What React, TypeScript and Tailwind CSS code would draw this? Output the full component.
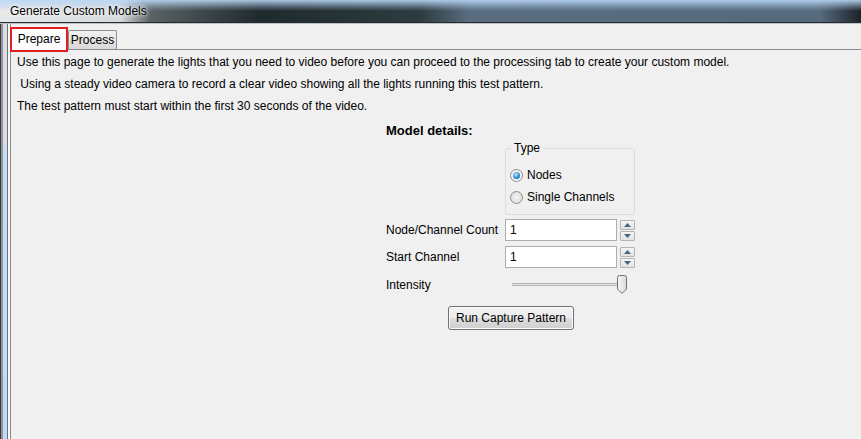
export default function App() {
  return (
    <div className="w-[861px] h-[439px] overflow-hidden flex flex-col bg-[#f0f0f0] font-['Liberation_Sans',sans-serif] text-[12px] text-black">
      {/* title bar */}
      <div className="h-[22px] shrink-0 flex items-center pl-[10px] [background-image:linear-gradient(180deg,rgba(185,215,245,0.9)_0px,rgba(175,208,240,0.4)_6px,rgba(0,0,0,0)_11px),linear-gradient(90deg,#e6e8ea_0px,#d6d9dc_120px,#5a6264_150px,#1f2a2c_260px,#2d3b40_420px,#5a6d80_470px,#566a7d_820px,#1c2328_861px)]">
        <span className="text-[12px] text-black [text-shadow:0_0_6px_#fff,0_0_3px_#fff]">Generate Custom Models</span>
      </div>
      <div className="h-[1px] shrink-0 bg-[#2b2b2b]" />
      <div className="h-[1px] shrink-0 bg-[#b9c2ca]" />

      <div className="flex flex-1 min-h-0">
        {/* left window frame */}
        <div className="w-[11px] shrink-0 flex">
          <div className="w-[1px] bg-[#3a3a3a]" />
          <div className="w-[2px] bg-[#8f959c]" />
          <div className="w-[4px] bg-[linear-gradient(180deg,#dcdde0_0px,#dcdde0_120px,#c6def6_124px,#c3dcf6_100%)]" />
          <div className="w-[1px] bg-[#6f747a]" />
          <div className="w-[2px] bg-[#f8f8f8]" />
          <div className="w-[1px] bg-[#8a8a8a]" />
        </div>

        <div className="flex-1 flex flex-col min-w-0">
          {/* tabs */}
          <div className="h-[25px] shrink-0 flex items-end -ml-[1px]">
            <div className="h-[25px] w-[58px] border-[2px] border-[#e31c1c] flex items-center justify-center bg-[#fcfcfc] relative z-10 -mb-[3px]">
              <span className="pb-[1px]">Prepare</span>
            </div>
            <div className="h-[19px] w-[49px] border border-b-0 border-[#8e8f8f] rounded-t-[2px] flex items-center justify-center bg-[linear-gradient(180deg,#f2f2f2,#e3e3e3_50%,#d9d9d9)]">
              Process
            </div>
          </div>
          {/* panel */}
          <div className="flex-1 border-t border-[#898c95] bg-[#f0f0f0] pl-[6px] pt-[1px]">
            <p className="h-[22px] leading-[22px]">Use this page to generate the lights that you need to video before you can proceed to the processing tab to create your custom model.</p>
            <p className="h-[22px] leading-[22px]">&nbsp;Using a steady video camera to record a clear video showing all the lights running this test pattern.</p>
            <p className="h-[22px] leading-[22px]">The test pattern must start within the first 30 seconds of the video.</p>

            <div className="ml-[369px] mt-[5px] w-[250px]">
              <div className="text-[13px] font-bold h-[18px] leading-[18px]">Model details:</div>

              <div className="flex mt-[1px]">
                <div className="w-[119px]" />
                <fieldset className="w-[130px] h-[74px] border border-[#d5dfe5] rounded-[3px] px-[4px]">
                  <legend className="px-[3px] ml-[1px] leading-[14px]">Type</legend>
                  <label className="flex items-center gap-[4px] h-[22px] mt-[9px]">
                    <span className="w-[13px] h-[13px] rounded-full border border-[#8f8f8f] bg-[radial-gradient(circle,#e6e6e6,#fafafa)] flex items-center justify-center">
                      <span className="w-[7px] h-[7px] rounded-full bg-[radial-gradient(circle_at_40%_35%,#bfe5ff,#2a88d4_60%,#0d4f9a)]" />
                    </span>
                    Nodes
                  </label>
                  <label className="flex items-center gap-[4px] h-[22px]">
                    <span className="w-[13px] h-[13px] rounded-full border border-[#8f8f8f] bg-[radial-gradient(circle_at_50%_50%,#f4f4f4,#d6d6d6)]" />
                    Single Channels
                  </label>
                </fieldset>
              </div>

              <div className="flex items-center mt-[4px] h-[22px]">
                <div className="w-[119px]">Node/Channel Count</div>
                <SpinInput />
              </div>
              <div className="flex items-center mt-[5px] h-[22px]">
                <div className="w-[119px]">Start Channel</div>
                <SpinInput />
              </div>
              <div className="flex items-center mt-[7px] h-[19px]">
                <div className="w-[119px]">Intensity</div>
                <div className="flex items-center pl-[7px]">
                  <div className="w-[106px] h-[3px] border border-[#b2b2b2] bg-[#e6e6e6] rounded-[1px]" />
                  <svg width="12" height="19" viewBox="0 0 12 19" className="-ml-[2px]">
                    <defs>
                      <linearGradient id="th" x1="0" x2="1" y1="0" y2="0">
                        <stop offset="0" stopColor="#f6f6f6" />
                        <stop offset="1" stopColor="#d9d9d9" />
                      </linearGradient>
                    </defs>
                    <path d="M1.5 2.5 Q1.5 0.5 3.5 0.5 L8.5 0.5 Q10.5 0.5 10.5 2.5 L10.5 14 L6 18.5 L1.5 14 Z" fill="url(#th)" stroke="#707070" />
                  </svg>
                </div>
              </div>

              <div className="flex mt-[12px] pl-[62px]">
                <button className="h-[24px] w-[126px] rounded-[3px] border border-[#707070] bg-[linear-gradient(180deg,#f2f2f2_0%,#ebebeb_50%,#dddddd_51%,#cfcfcf_100%)] shadow-[inset_0_0_0_1px_#fbfbfb] text-[12px]">
                  Run Capture Pattern
                </button>
              </div>
            </div>
          </div>
        </div>
      </div>
    </div>
  );
}

function SpinInput() {
  return (
    <div className="flex items-center gap-[3px]">
      <div className="w-[112px] h-[22px] border border-[#abadb3] bg-white px-[4px] leading-[20px]">1</div>
      <div className="flex flex-col gap-[1px]">
        <SpinBtn up />
        <SpinBtn />
      </div>
    </div>
  );
}

function SpinBtn({ up }: { up?: boolean }) {
  return (
    <div className="w-[15px] h-[10px] border border-[#b5b5b5] rounded-[1px] bg-[linear-gradient(180deg,#f5f5f5,#e2e2e2)] flex items-center justify-center">
      <svg width="7" height="4" viewBox="0 0 7 4">
        <path d={up ? "M0 4 L3.5 0 L7 4 Z" : "M0 0 L7 0 L3.5 4 Z"} fill="#4b6288" />
      </svg>
    </div>
  );
}
